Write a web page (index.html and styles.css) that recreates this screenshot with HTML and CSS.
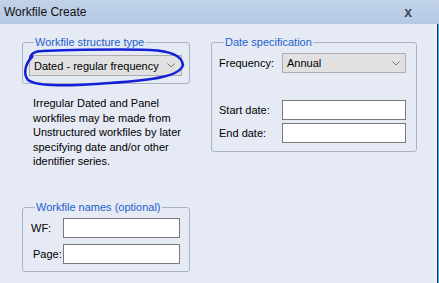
FILE: index.html
```html
<!DOCTYPE html>
<html lang="en">
<head>
  <meta charset="UTF-8">
  <title>Workfile Create</title>
  <link rel="stylesheet" href="styles.css">
</head>
<body>
  <div class="dialog">
    <div class="title-bar">
      <span class="title">Workfile Create</span>
      <span class="close">x</span>
    </div>
    <div class="content">
      <div class="left-col">
        <fieldset class="group structure">
          <legend>Workfile structure type</legend>
          <div class="select">
            <span>Dated - regular frequency</span>
            <svg class="chevron" width="8" height="5" viewBox="0 0 8 5"><polyline points="0.5,0.5 4,4 7.5,0.5" fill="none" stroke="#777" stroke-width="1"/></svg>
          </div>
        </fieldset>
        <p class="note">Irregular Dated and Panel<br>workfiles may be made from<br>Unstructured workfiles by later<br>specifying date and/or other<br>identifier series.</p>
        <fieldset class="group names">
          <legend>Workfile names (optional)</legend>
          <div class="field-row">
            <label class="wf-label">WF:</label>
            <input type="text" class="text-input">
          </div>
          <div class="field-row">
            <label class="page-label">Page:</label>
            <input type="text" class="text-input">
          </div>
        </fieldset>
      </div>
      <fieldset class="group dates">
        <legend>Date specification</legend>
        <div class="date-row">
          <label>Frequency:</label>
          <div class="select freq">
            <span>Annual</span>
            <svg class="chevron" width="8" height="5" viewBox="0 0 8 5"><polyline points="0.5,0.5 4,4 7.5,0.5" fill="none" stroke="#777" stroke-width="1"/></svg>
          </div>
        </div>
        <div class="date-row start">
          <label>Start date:</label>
          <input type="text" class="text-input">
        </div>
        <div class="date-row end">
          <label>End date:</label>
          <input type="text" class="text-input">
        </div>
      </fieldset>
    </div>
    <svg class="scribble" width="439" height="283" viewBox="0 0 439 283">
      <path d="M31 58 C30 54 35 51 42 51 C72 50 120 49 150 50 C172 51 182 56 183 65 C180 76 155 80 110 83 C70 86 38 87 28 80 C23 74 25 64 32 57 C33 56 31 55 30 58"
            fill="none" stroke="#1420d6" stroke-width="2.5" stroke-linecap="round"/>
    </svg>
  </div>
</body>
</html>
```

FILE: styles.css
```css
body {
  margin: 0;
  font-family: "Liberation Sans", Arial, sans-serif;
  font-size: 11px;
  color: #000;
}

.dialog {
  position: relative;
  width: 439px;
  height: 283px;
  overflow: hidden;
  background: #e5eaf5;
  box-shadow: inset -1px 0 0 #35b7d6, inset -2px 0 0 #1c2f44, inset -3px 0 0 #f3f6fb;
}

.title-bar {
  height: 24px;
  display: flex;
  align-items: center;
  justify-content: space-between;
  padding: 0 27px 0 4px;
  background: linear-gradient(#c1d2ea, #b6c9e3);
}

.title {
  font-size: 12px;
  color: #111;
}

.close {
  font-weight: bold;
  font-size: 14px;
  color: #3b475a;
}

.content {
  display: flex;
  gap: 21px;
  padding: 12px 0 0 22px;
}

.left-col {
  width: 168px;
  display: flex;
  flex-direction: column;
}

.group {
  margin: 0;
  border: 1px solid #a8b3c5;
  border-radius: 3px;
  min-width: 0;
}

.group legend {
  padding: 0 1px;
  margin-left: 5px;
  line-height: 13px;
  color: #1f5fc9;
}

.structure {
  padding: 6px 7px 7px 6px;
}

.select {
  height: 21px;
  box-sizing: border-box;
  display: flex;
  align-items: center;
  justify-content: space-between;
  padding: 0 6px 0 4px;
  border: 1px solid #adadad;
  background: #e1e1e1;
}

.note {
  margin: 12px 0 0 11px;
  line-height: 14.5px;
}

.names {
  margin-top: 32px;
  padding: 4px 9px 7px 7px;
}

.field-row {
  display: flex;
  align-items: center;
}

.field-row + .field-row {
  margin-top: 6px;
}

.field-row label {
  width: 33px;
  box-sizing: border-box;
}

.wf-label {
  padding-left: 1px;
}

.page-label {
  padding-left: 3px;
}

.text-input {
  margin: 0;
  padding: 0;
  height: 20px;
  box-sizing: border-box;
  border: 1px solid #7a7a7a;
  background: #fff;
  font: inherit;
}

.names .text-input {
  width: 117px;
}

.dates {
  width: 206px;
  box-sizing: border-box;
  align-self: flex-start;
  padding: 4px 9px 8px 7px;
}

.date-row {
  display: flex;
  align-items: center;
}

.date-row label {
  width: 63px;
}

.date-row .text-input,
.date-row .freq {
  width: 124px;
}

.freq {
  height: 20px;
  padding-right: 5px;
}

.date-row.start {
  margin-top: 27px;
}

.date-row.end {
  margin-top: 3px;
}

.scribble {
  position: absolute;
  top: 0;
  left: 0;
  pointer-events: none;
}
```
